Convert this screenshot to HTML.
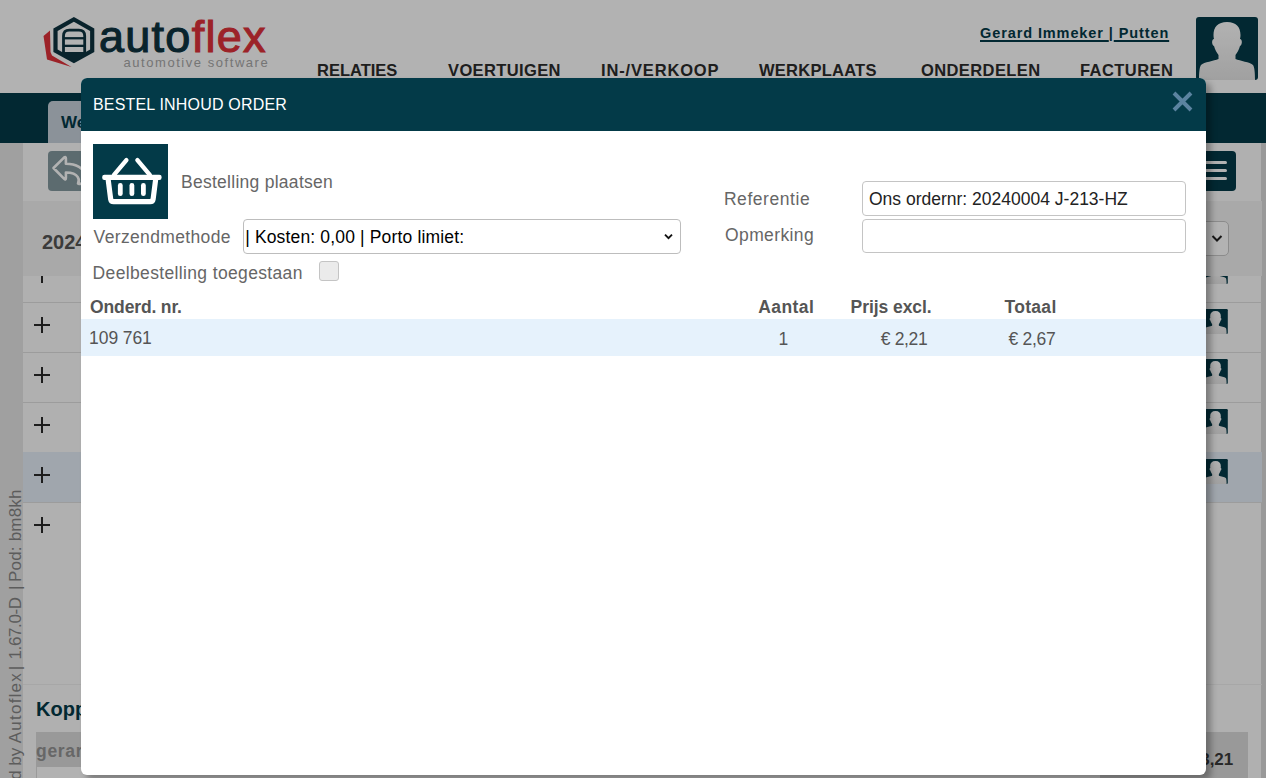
<!DOCTYPE html>
<html><head><meta charset="utf-8">
<style>
html,body{margin:0;padding:0;}
body{width:1266px;height:778px;overflow:hidden;position:relative;background:#fff;font-family:"Liberation Sans",sans-serif;}
.a{position:absolute;}
.t{position:absolute;line-height:0;white-space:pre;}
#overlay{position:absolute;left:0;top:0;width:1266px;height:778px;background:rgba(0,0,0,0.3);}
#modal{position:absolute;left:81px;top:78px;width:1125px;height:697px;background:#fff;border-radius:6px;box-shadow:5px 5px 6px rgba(0,0,0,0.3);overflow:hidden;}
</style></head>
<body>
<!-- ============ PAGE BACKGROUND ============ -->
<svg width="0" height="0" style="position:absolute"><defs><linearGradient id="ag" x1="0" y1="0" x2="0" y2="1"><stop offset="0" stop-color="#fff"/><stop offset="1" stop-color="#e6e6e6"/></linearGradient>
<path id="sil" d="M31,5 C22,5 17.5,10 17.5,18 C17.5,20 17.8,21 18,22 C15.5,22 15.5,28 18,29 C19,33 21,36 22.5,38 L22.5,42 C18,44 8,45 5,48 C3.5,50 3,56 3,63 L59,63 C59,56 58.5,50 57,48 C54,45 44,44 39.5,42 L39.5,38 C41,36 43,33 44,29 C46.5,28 46.5,22 44,22 C44.2,21 44.5,20 44.5,18 C44.5,10 40,5 31,5 Z" fill="url(#ag)"/></defs></svg>
<div id="page">
  <!-- header -->
  <div class="a" style="left:0;top:0;width:1266px;height:93px;background:#fff;"></div>
  <!-- logo -->
  <svg class="a" style="left:0;top:0" width="300" height="90" viewBox="0 0 300 90">
    <polygon points="50,30.5 43.5,36 47,59.5 71.5,67 52,55.5 50.5,52" fill="#e0323a"/>
    <polygon points="73.9,17 94.3,28.6 94.3,52.1 73.9,63.3 53.4,52.1 53.4,28.6" fill="#0d3340"/>
    <polygon points="73.9,21.8 90.1,31 90.1,49.6 85.8,52 62,52 57.6,49.6 57.6,31" fill="#fff"/>
    <path d="M63.5,52 V36 Q63.5,30.2 69.3,30.2 H78.9 Q84.7,30.2 84.7,36 V52" fill="none" stroke="#0d3340" stroke-width="2.8"/>
    <rect x="63" y="37.1" width="22" height="2.3" fill="#0d3340"/>
    <rect x="63" y="44.7" width="22" height="2.3" fill="#0d3340"/>
    <text x="99" y="52.4" font-family="Liberation Sans" font-weight="400" font-size="45" fill="#0d3340" stroke="#0d3340" stroke-width="1.1" letter-spacing="1.27">auto<tspan fill="#e0323a" stroke="#e0323a">flex</tspan></text>
    <text x="123.5" y="67" font-family="Liberation Sans" font-size="13" fill="#a8a8a8" letter-spacing="1.55">automotive software</text>
  </svg>
  <!-- user link -->
  <div class="t" style="left:980px;top:33.4px;font-size:14.5px;font-weight:700;color:#033a48;letter-spacing:0.9px;"><span style="text-decoration:underline;text-decoration-thickness:1.6px;text-underline-offset:2.2px">Gerard Immeker </span>|<span style="text-decoration:underline;text-decoration-thickness:1.6px;text-underline-offset:2.2px"> Putten</span></div>
  <!-- avatar -->
  <div class="a" style="left:1196px;top:17px;width:62px;height:63px;background:#033a48;border-radius:3px;overflow:hidden;">
    <svg width="62" height="63" viewBox="0 0 62 63"><use href="#sil"/></svg>
  </div>
  <!-- nav -->
  <div class="t" style="left:317px;top:70.2px;font-size:16.5px;font-weight:700;color:#2b2b2b;letter-spacing:0px;">RELATIES</div>
  <div class="t" style="left:448px;top:70.2px;font-size:16.5px;font-weight:700;color:#2b2b2b;letter-spacing:0.37px;">VOERTUIGEN</div>
  <div class="t" style="left:601px;top:70.2px;font-size:16.5px;font-weight:700;color:#2b2b2b;letter-spacing:0.84px;">IN-/VERKOOP</div>
  <div class="t" style="left:759px;top:70.2px;font-size:16.5px;font-weight:700;color:#2b2b2b;letter-spacing:0.25px;">WERKPLAATS</div>
  <div class="t" style="left:921px;top:70.2px;font-size:16.5px;font-weight:700;color:#2b2b2b;letter-spacing:0.4px;">ONDERDELEN</div>
  <div class="t" style="left:1080px;top:70.2px;font-size:16.5px;font-weight:700;color:#2b2b2b;letter-spacing:0.44px;">FACTUREN</div>

  <!-- band -->
  <div class="a" style="left:0;top:93px;width:1266px;height:50px;background:#033a48;"></div>
  <!-- tab -->
  <div class="a" style="left:48px;top:101px;width:150px;height:42px;background:#c7d1dc;border-radius:5px 5px 0 0;"></div>
  <div class="t" style="left:61px;top:123px;font-size:17px;font-weight:700;color:#033a48;">Werkplaats</div>

  <!-- content bg -->
  <div class="a" style="left:0;top:143px;width:1266px;height:635px;background:#fcfcfc;"></div>
  <div class="a" style="left:0;top:143px;width:23px;height:635px;background:#e6e6e6;"></div>
  <div class="a" style="left:1261px;top:143px;width:5px;height:635px;background:#dcdcdc;"></div>
  <!-- back button -->
  <div class="a" style="left:48px;top:151px;width:48px;height:40px;background:#849aa0;border-radius:4px;"></div>
  <svg class="a" style="left:0;top:140px" width="100" height="60" viewBox="0 140 100 60"><path d="M53.5,168 L64,157.6 Q65.9,156 65.9,158.6 L65.9,163.8 C76,163.8 84,168 86,176 C86,182 82,185 78,183.5 C79.5,181 80,172.5 65.9,172.5 L65.9,178 Q65.9,180.6 64,178.6 Z" fill="none" stroke="#fff" stroke-width="2.6" stroke-linejoin="round"/></svg>
  <!-- hamburger -->
  <div class="a" style="left:1190px;top:151px;width:46px;height:40px;background:#033a48;border-radius:4px;"></div>
  <div class="a" style="left:1200px;top:161px;width:27px;height:3px;background:#fff;border-radius:2px;"></div>
  <div class="a" style="left:1200px;top:169px;width:27px;height:3px;background:#fff;border-radius:2px;"></div>
  <div class="a" style="left:1200px;top:177px;width:27px;height:3px;background:#fff;border-radius:2px;"></div>
  <!-- rows -->
  <div class="a" style="left:23px;top:302px;width:1239px;height:1px;background:#e0e0e0;"></div>
  <div class="a" style="left:23px;top:352px;width:1239px;height:1px;background:#e0e0e0;"></div>
  <div class="a" style="left:23px;top:402px;width:1239px;height:1px;background:#e0e0e0;"></div>
  <div class="a" style="left:23px;top:452px;width:1239px;height:51px;background:#e5eef8;"></div>
  <div class="a" style="left:23px;top:502px;width:1239px;height:1px;background:#e0e0e0;"></div>
  <div class="a" style="left:34.1px;top:273.7px;width:16px;height:2.6px;background:#2a2a2a;"></div>
  <div class="a" style="left:40.9px;top:267px;width:2.5px;height:16px;background:#2a2a2a;"></div>
  <div class="a" style="left:34.1px;top:323.6px;width:16px;height:2.6px;background:#2a2a2a;"></div>
  <div class="a" style="left:40.9px;top:316.8px;width:2.5px;height:16px;background:#2a2a2a;"></div>
  <div class="a" style="left:34.1px;top:373.6px;width:16px;height:2.6px;background:#2a2a2a;"></div>
  <div class="a" style="left:40.9px;top:366.8px;width:2.5px;height:16px;background:#2a2a2a;"></div>
  <div class="a" style="left:34.1px;top:423.6px;width:16px;height:2.6px;background:#2a2a2a;"></div>
  <div class="a" style="left:40.9px;top:416.8px;width:2.5px;height:16px;background:#2a2a2a;"></div>
  <div class="a" style="left:34.1px;top:473.6px;width:16px;height:2.6px;background:#2a2a2a;"></div>
  <div class="a" style="left:40.9px;top:466.8px;width:2.5px;height:16px;background:#2a2a2a;"></div>
  <div class="a" style="left:34.1px;top:523.6px;width:16px;height:2.6px;background:#2a2a2a;"></div>
  <div class="a" style="left:40.9px;top:516.8px;width:2.5px;height:16px;background:#2a2a2a;"></div>
  <svg class="a" style="left:1203px;top:259px" width="25" height="25" viewBox="0 0 62 63"><rect width="62" height="63" rx="3" fill="#033a48"/><use href="#sil"/></svg>
  <svg class="a" style="left:1203px;top:309px" width="25" height="25" viewBox="0 0 62 63"><rect width="62" height="63" rx="3" fill="#033a48"/><use href="#sil"/></svg>
  <svg class="a" style="left:1203px;top:359px" width="25" height="25" viewBox="0 0 62 63"><rect width="62" height="63" rx="3" fill="#033a48"/><use href="#sil"/></svg>
  <svg class="a" style="left:1203px;top:409px" width="25" height="25" viewBox="0 0 62 63"><rect width="62" height="63" rx="3" fill="#033a48"/><use href="#sil"/></svg>
  <svg class="a" style="left:1203px;top:459px" width="25" height="25" viewBox="0 0 62 63"><rect width="62" height="63" rx="3" fill="#033a48"/><use href="#sil"/></svg>
  <!-- list header -->
  <div class="a" style="left:23px;top:201px;width:1239px;height:75px;background:#f2f2f2;"></div>
  <div class="t" style="left:42px;top:242px;font-size:20px;font-weight:700;color:#555;">2024</div>
  <div class="a" style="left:1150px;top:221px;width:79px;height:35px;background:#fff;border:1px solid #c8c8c8;border-radius:5px;box-sizing:border-box;"></div>
  <svg class="a" style="left:1210px;top:233px" width="14" height="10" viewBox="0 0 14 10"><path d="M2.5,3 L7,7.5 L11.5,3" fill="none" stroke="#222" stroke-width="2"/></svg>
  <!-- bottom section -->
  <div class="a" style="left:23px;top:684px;width:1239px;height:1px;background:#f0f0f0;"></div>
  <div class="t" style="left:36px;top:709px;font-size:20px;font-weight:700;color:#033a48;">Koppelingen</div>
  <div class="a" style="left:36px;top:732px;width:1212px;height:35px;background:#dcdcdc;"></div>
  <div class="a" style="left:36px;top:767px;width:1212px;height:11px;background:#fff;border-left:1px solid #ddd;"></div>
  <div class="t" style="left:36px;top:751px;font-size:17.5px;font-weight:700;color:#949494;letter-spacing:0.7px;">gerard</div>
  <div class="a" style="left:1100px;top:766px;width:148px;height:12px;background:#dcdcdc;"></div>
  <div class="t" style="left:1186px;top:760px;font-size:17px;font-weight:700;color:#3a3a3a;">€ 3,21</div>
  <!-- vertical text -->
  <svg class="a" style="left:0;top:0" width="30" height="778" viewBox="0 0 30 778"><g transform="rotate(-90)" font-family="Liberation Sans" font-size="17" fill="#858585">
    <text x="-747.7" y="21.4" text-anchor="end">Powered by</text>
    <text x="-743.2" y="21.4" textLength="70" lengthAdjust="spacing">Autoflex</text>
    <text x="-670.2" y="21.4">|</text>
    <text x="-659.5" y="21.4" textLength="62.5" lengthAdjust="spacing">1.67.0-D</text>
    <text x="-590" y="21.4">|</text>
    <text x="-582" y="21.4" textLength="92.5" lengthAdjust="spacing">Pod: bm8kh</text>
  </g></svg>
</div>

<div id="overlay"></div>

<!-- ============ MODAL ============ -->
<div id="modal">
  <div class="a" style="left:0;top:0;width:1125px;height:53px;background:#033a48;"></div>
  <div class="t" style="left:12px;top:27px;font-size:16px;color:#fff;letter-spacing:0.18px;">BESTEL INHOUD ORDER</div>
  <svg class="a" style="left:1091px;top:13px" width="21" height="21" viewBox="0 0 21 21"><path d="M2,2 L19,19 M19,2 L2,19" stroke="#5b83a0" stroke-width="3.9"/></svg>

  <!-- icon -->
  <div class="a" style="left:12px;top:66px;width:75px;height:75px;background:#033a48;">
    <svg width="75" height="75" viewBox="0 0 75 75">
      <path d="M33.4,16.2 L21,30.8 M44.4,16.2 L56.8,30.8" stroke="#fff" stroke-width="4.4" stroke-linecap="round"/>
      <rect x="9.2" y="30.7" width="59.4" height="5.3" rx="2.2" fill="#fff"/>
      <path d="M15.1,35 L17.7,55.3 Q18.1,57.7 20.6,57.7 L57.2,57.7 Q59.7,57.7 60.1,55.3 L62.7,35" fill="none" stroke="#fff" stroke-width="5.2" stroke-linejoin="round"/>
      <rect x="24.9" y="39" width="4.8" height="13.1" rx="2.4" fill="#fff"/>
      <rect x="36.5" y="39" width="4.8" height="13.1" rx="2.4" fill="#fff"/>
      <rect x="48" y="39" width="4.8" height="13.1" rx="2.4" fill="#fff"/>
    </svg>
  </div>
  <div class="t" style="left:100px;top:104.2px;font-size:17.5px;color:#666;letter-spacing:0.27px;">Bestelling plaatsen</div>

  <div class="t" style="left:12.6px;top:158.6px;font-size:17.5px;color:#666;letter-spacing:0.355px;">Verzendmethode</div>
  <div class="a" style="left:162px;top:141px;width:438px;height:35px;border:1px solid #bdbdbd;border-radius:4px;box-sizing:border-box;background:#fff;"></div>
  <div class="t" style="left:164.2px;top:159px;font-size:17.5px;color:#000;letter-spacing:0.156px;">| Kosten: 0,00 | Porto limiet:</div>
  <svg class="a" style="left:581px;top:153px" width="12" height="10" viewBox="0 0 12 10"><path d="M3,3.7 L6.5,7.2 L10,3.7" fill="none" stroke="#111" stroke-width="1.9"/></svg>

  <div class="t" style="left:11.6px;top:195.1px;font-size:17.5px;color:#666;letter-spacing:0.352px;">Deelbestelling toegestaan</div>
  <div class="a" style="left:238px;top:183px;width:20px;height:20px;border:1px solid #c4c4c4;border-radius:3px;box-sizing:border-box;background:#ebebeb;"></div>

  <div class="t" style="left:642.9px;top:121.4px;font-size:17.5px;color:#666;letter-spacing:0.566px;">Referentie</div>
  <div class="a" style="left:781px;top:103px;width:324px;height:35px;border:1px solid #c4c4c4;border-radius:4px;box-sizing:border-box;background:#fff;"></div>
  <div class="t" style="left:788px;top:121.4px;font-size:17.5px;color:#222;letter-spacing:0px;">Ons ordernr: 20240004 J-213-HZ</div>
  <div class="t" style="left:644px;top:156.9px;font-size:17.5px;color:#666;letter-spacing:0.393px;">Opmerking</div>
  <div class="a" style="left:781px;top:141px;width:324px;height:34px;border:1px solid #c4c4c4;border-radius:4px;box-sizing:border-box;background:#fff;"></div>

  <!-- table -->
  <div class="t" style="left:9.1px;top:228.6px;font-size:17.5px;font-weight:700;color:#555;letter-spacing:-0.15px;">Onderd. nr.</div>
  <div class="t" style="left:677.2px;top:229.4px;font-size:17.5px;font-weight:700;color:#555;letter-spacing:0.436px;">Aantal</div>
  <div class="t" style="left:769.6px;top:229.4px;font-size:17.5px;font-weight:700;color:#555;letter-spacing:-0.066px;">Prijs excl.</div>
  <div class="t" style="left:923.6px;top:229.4px;font-size:17.5px;font-weight:700;color:#555;letter-spacing:0.285px;">Totaal</div>
  <div class="a" style="left:0;top:241px;width:1125px;height:37px;background:#e6f2fc;"></div>
  <div class="t" style="left:8.1px;top:259.6px;font-size:17.5px;color:#555;letter-spacing:-0.09px;">109 761</div>
  <div class="t" style="left:697.6px;top:260.6px;font-size:17.5px;color:#555;">1</div>
  <div class="t" style="left:799.8px;top:260.6px;font-size:17.5px;color:#555;letter-spacing:-0.364px;">€ 2,21</div>
  <div class="t" style="left:927.5px;top:260.6px;font-size:17.5px;color:#555;letter-spacing:-0.284px;">€ 2,67</div>
</div>
</body></html>
